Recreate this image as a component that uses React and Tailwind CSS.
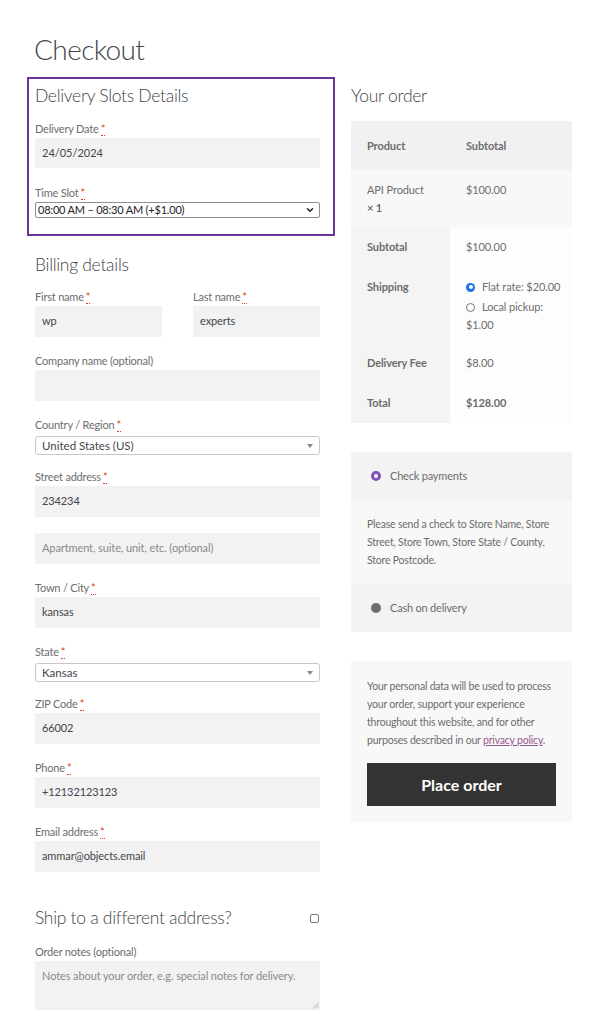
import React from "react";
import { ChevronDown } from "lucide-react";

const Req = () => (
  <abbr
    title="required"
    className="ml-[2px] text-[#e2401c] no-underline border-b border-dotted border-[#e2401c] leading-none"
  >
    *
  </abbr>
);

function Label({ children, required }) {
  return (
    <label className="block h-4 text-[11px] tracking-[-0.2px] leading-4 text-[#6d6d6d] whitespace-nowrap">
      {children}
      {required && <Req />}
    </label>
  );
}

function Field({ label, required, value, placeholder, className = "" }) {
  return (
    <div className={className}>
      {label && <Label required={required}>{label}</Label>}
      <div className={`${label ? "mt-[1px]" : ""} h-[31px] bg-[#f2f2f2] flex items-center px-[7px] text-[11px] tracking-[-0.1px]`}>
        {value ? (
          <span className="text-[#43454b]">{value}</span>
        ) : (
          <span className="text-[#8a8a8a]">{placeholder}</span>
        )}
      </div>
    </div>
  );
}

function Select2({ label, value, className = "" }) {
  return (
    <div className={className}>
      <Label required>{label}</Label>
      <div className="mt-[3px] h-[19px] border border-[#c8c8c8] rounded-[3px] bg-white flex items-center justify-between pl-[6px] pr-[6px] text-[11.5px] text-[#43454b]">
        <span>{value}</span>
        <svg width="6" height="4" viewBox="0 0 6 4">
          <path d="M0 0h6L3 4z" fill="#888" />
        </svg>
      </div>
    </div>
  );
}

export default function App() {
  return (
    <div className="w-[599px] bg-white font-[Lato,sans-serif] text-[#6d6d6d] pb-[15px]">
      {/* Title */}
      <h1 className="pt-[31px] pl-[34px] text-[28px] tracking-[-0.6px] leading-[36px] font-light text-[#43454b] mb-[10px]">
        Checkout
      </h1>

      <div className="flex">
        {/* Left column */}
        <div className="ml-[35px] w-[285px]">
          {/* Delivery slots box */}
          <div className="-ml-[8px] -mr-[15px] border-2 border-[#67359a] pl-[6px] pr-[13px] pt-[5px] pb-[16px]">
            <h3 className="text-[17.5px] tracking-[-0.3px] leading-6 font-light text-[#43454b]">Delivery Slots Details</h3>
            <div className="mt-[13px]">
              <Label required>Delivery Date</Label>
              <div className="mt-[1px] h-[30px] bg-[#f2f2f2] flex items-center px-[7px] text-[11px] text-[#43454b]">
                24/05/2024
              </div>
            </div>
            <div className="mt-[17px]">
              <Label required>Time Slot</Label>
              <div className="mt-[1px] h-[16px] border border-[#8f8f8f] rounded-[2px] bg-white flex items-center justify-between pl-[2px] pr-[4px] text-[11px] tracking-[-0.2px] text-[#222]">
                <span>08:00 AM – 08:30 AM (+$1.00)</span>
                <ChevronDown size={10} strokeWidth={3.5} color="#222" />
              </div>
            </div>
          </div>

          {/* Billing */}
          <h3 className="mt-[17px] text-[17.5px] tracking-[-0.3px] leading-6 font-light text-[#43454b]">Billing details</h3>
          <div className="mt-[12px] flex gap-[31px]">
            <Field label="First name" required value="wp" className="w-[127px]" />
            <Field label="Last name" required value="experts" className="flex-1" />
          </div>
          <Field label="Company name (optional)" className="mt-[16px]" />
          <Select2 label="Country / Region" value="United States (US)" className="mt-[16px]" />
          <Field label="Street address" required value="234234" className="mt-[14px]" />
          <Field placeholder="Apartment, suite, unit, etc. (optional)" className="mt-[16px]" />
          <Field label="Town / City" required value="kansas" className="mt-[16px]" />
          <Select2 label="State" value="Kansas" className="mt-[16px]" />
          <Field label="ZIP Code" required value="66002" className="mt-[14px]" />
          <Field label="Phone" required value="+12132123123" className="mt-[16px]" />
          <Field label="Email address" required value="ammar@objects.email" className="mt-[16px]" />

          {/* Ship to different */}
          <div className="mt-[34px] flex items-center justify-between">
            <h3 className="text-[17.5px] tracking-[-0.3px] leading-6 font-light text-[#43454b]">Ship to a different address?</h3>
            <span className="mr-[1px] w-[9px] h-[9px] border border-[#767676] rounded-[2px] bg-white" />
          </div>
          <div className="mt-[14px]">
            <Label>Order notes (optional)</Label>
            <div className="relative mt-[1px] h-[49px] bg-[#f2f2f2] px-[7px] pt-[7px] text-[11px] tracking-[-0.1px] text-[#8a8a8a]">
              Notes about your order, e.g. special notes for delivery.
              <svg className="absolute right-[1px] bottom-[1px]" width="7" height="7" viewBox="0 0 7 7">
                <path d="M6.5 1L1 6.5M6.5 4L4 6.5" stroke="#999" strokeWidth="0.8" />
              </svg>
            </div>
          </div>
        </div>

        {/* Right column */}
        <div className="ml-[31px] w-[221px] pt-[7px]">
          <h3 className="text-[17.5px] tracking-[-0.3px] leading-6 font-light text-[#43454b]">Your order</h3>

          <table className="mt-[13px] w-full border-collapse text-[11px] tracking-[-0.1px] leading-[18px] text-left">
            <thead>
              <tr className="bg-[#f1f1f1]">
                <th className="w-[99px] pl-4 pt-4 pb-[15px] font-bold">Product</th>
                <th className="pl-4 pt-4 pb-[15px] font-bold">Subtotal</th>
              </tr>
            </thead>
            <tbody>
              <tr className="bg-[#f8f8f8] align-top">
                <td className="pl-4 pt-[11px] pb-[10px]">
                  API Product
                  <br />
                  <strong className="font-bold">× 1</strong>
                </td>
                <td className="pl-4 pt-[11px] pb-[10px]">$100.00</td>
              </tr>
            </tbody>
            <tfoot className="align-top">
              <tr>
                <th className="bg-[#f4f4f4] pl-4 py-[11px] font-bold">Subtotal</th>
                <td className="bg-[#fdfdfd] pl-4 py-[11px]">$100.00</td>
              </tr>
              <tr>
                <th className="bg-[#f4f4f4] pl-4 pt-[11px] pb-[9px] font-bold">Shipping</th>
                <td className="bg-[#fdfdfd] pl-4 pt-[11px] pb-[9px]">
                  <div className="flex items-center h-[18px] whitespace-nowrap">
                    <span className="w-[9px] h-[9px] rounded-full bg-[#1a73e8] flex items-center justify-center mr-[7px]">
                      <span className="w-[4px] h-[4px] rounded-full bg-white" />
                    </span>
                    Flat rate: $20.00
                  </div>
                  <div className="mt-[2px]">
                    <div className="flex items-center h-[18px]">
                      <span className="w-[9px] h-[9px] rounded-full border border-[#767676] bg-white mr-[7px]" />
                      Local pickup:
                    </div>
                    <div>$1.00</div>
                  </div>
                </td>
              </tr>
              <tr>
                <th className="bg-[#f4f4f4] pl-4 py-[11px] font-bold whitespace-nowrap">Delivery Fee</th>
                <td className="bg-[#fdfdfd] pl-4 py-[11px]">$8.00</td>
              </tr>
              <tr>
                <th className="bg-[#f4f4f4] pl-4 py-[11px] font-bold">Total</th>
                <td className="bg-[#fdfdfd] pl-4 py-[11px] font-bold">$128.00</td>
              </tr>
            </tfoot>
          </table>

          {/* Payment */}
          <div className="mt-[29px] text-[10.5px] tracking-[-0.2px] leading-[18px]">
            <div className="h-[48px] bg-[#f3f3f3] flex items-center pl-[20px] text-[11px]">
              <span className="w-[10px] h-[10px] rounded-full border-[3px] border-[#7f54b3] bg-white mr-[9px]" />
              Check payments
            </div>
            <div className="bg-[#f8f8f8] px-4 py-[15px] whitespace-nowrap">
              Please send a check to Store Name, Store
              <br />
              Street, Store Town, Store State / County,
              <br />
              Store Postcode.
            </div>
            <div className="h-[48px] bg-[#f3f3f3] flex items-center pl-[20px] text-[11px]">
              <span className="w-[10px] h-[10px] rounded-full bg-[#6d6d6d] mr-[9px]" />
              Cash on delivery
            </div>
          </div>

          {/* Privacy + place order */}
          <div className="mt-[29px] bg-[#f8f8f8] px-4 pt-4 pb-4 text-[10.5px] tracking-[-0.2px] leading-[18px]">
            <p className="whitespace-nowrap">
              Your personal data will be used to process
              <br />
              your order, support your experience
              <br />
              throughout this website, and for other
              <br />
              purposes described in our{" "}
              <a className="text-[#96588a] underline">privacy policy</a>.
            </p>
            <button className="mt-[14px] w-[189px] h-[43px] bg-[#333333] text-white text-[16px] tracking-normal font-bold">
              Place order
            </button>
          </div>
        </div>
      </div>
    </div>
  );
}
